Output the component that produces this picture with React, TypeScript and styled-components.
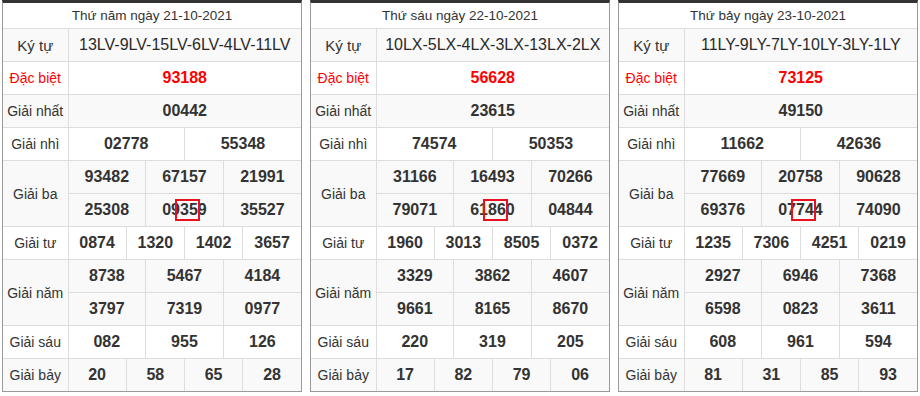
import React from "react";
import styled, { createGlobalStyle } from "styled-components";

const GlobalStyle = createGlobalStyle`
  html, body { margin: 0; padding: 0; background: #fff; }
  body { font-family: "Liberation Sans", Arial, sans-serif; color: #333; }
`;

type Day = {
  title: string;
  code: string;
  db: string;
  nhat: string;
  nhi: string[];
  ba: string[];
  tu: string[];
  nam: string[];
  sau: string[];
  bay: string[];
  hl: number;
};

const days: Day[] = [
  {
    title: "Thứ năm ngày 21-10-2021",
    code: "13LV-9LV-15LV-6LV-4LV-11LV",
    db: "93188",
    nhat: "00442",
    nhi: ["02778", "55348"],
    ba: ["93482", "67157", "21991", "25308", "09359", "35527"],
    tu: ["0874", "1320", "1402", "3657"],
    nam: ["8738", "5467", "4184", "3797", "7319", "0977"],
    sau: ["082", "955", "126"],
    bay: ["20", "58", "65", "28"],
    hl: 4,
  },
  {
    title: "Thứ sáu ngày 22-10-2021",
    code: "10LX-5LX-4LX-3LX-13LX-2LX",
    db: "56628",
    nhat: "23615",
    nhi: ["74574", "50353"],
    ba: ["31166", "16493", "70266", "79071", "61860", "04844"],
    tu: ["1960", "3013", "8505", "0372"],
    nam: ["3329", "3862", "4607", "9661", "8165", "8670"],
    sau: ["220", "319", "205"],
    bay: ["17", "82", "79", "06"],
    hl: 4,
  },
  {
    title: "Thứ bảy ngày 23-10-2021",
    code: "11LY-9LY-7LY-10LY-3LY-1LY",
    db: "73125",
    nhat: "49150",
    nhi: ["11662", "42636"],
    ba: ["77669", "20758", "90628", "69376", "07744", "74090"],
    tu: ["1235", "7306", "4251", "0219"],
    nam: ["2927", "6946", "7368", "6598", "0823", "3611"],
    sau: ["608", "961", "594"],
    bay: ["81", "31", "85", "93"],
    hl: 4,
  },
];

const Page = styled.div`
  display: flex;
  gap: 8px;
  padding-left: 2px;
`;

const Frame = styled.div`
  box-sizing: border-box;
  width: 300px;
  border: 1px solid #9a9a9a;
  border-top: 3px solid #333;
`;

const Table = styled.table`
  width: 100%;
  table-layout: fixed;
  border-collapse: collapse;
  border-style: hidden;
`;

const Row = styled.tr<{ $striped?: boolean }>`
  background: ${(p) => (p.$striped ? "#f9f9f9" : "#fff")};
`;

const TitleCell = styled.td`
  height: 25px;
  padding: 0;
  border: 1px solid #ddd;
  text-align: center;
  vertical-align: middle;
  font-size: 13.5px;
  color: #333;
  background: #fff;
`;

const LabelCell = styled.td<{ $red?: boolean; $big?: boolean }>`
  height: 32px;
  padding: 0;
  border: 1px solid #ddd;
  text-align: center;
  vertical-align: middle;
  font-size: ${(p) => (p.$big ? "15px" : "14px")};
  color: ${(p) => (p.$red ? "#f00" : "#333")};
  white-space: nowrap;
`;

const ValueCell = styled.td<{ $red?: boolean; $plain?: boolean }>`
  height: 32px;
  padding: 0;
  border: 1px solid #ddd;
  text-align: center;
  vertical-align: middle;
  font-size: 16px;
  font-weight: ${(p) => (p.$plain ? 400 : 700)};
  color: ${(p) => (p.$red ? "#f00" : p.$plain ? "#2a2a2a" : "#333")};
  white-space: nowrap;
`;

const Num = styled.span`
  position: relative;
  display: inline-block;
  line-height: 20px;
`;

const Mark = styled.span`
  position: absolute;
  left: 13px;
  top: -1px;
  width: 25px;
  height: 22px;
  box-sizing: border-box;
  border: 2px solid #e8101c;
`;

const NumCells: React.FC<{ values: string[]; hl?: number; offset?: number }> = ({
  values,
  hl,
  offset = 0,
}) => {
  const span = 12 / values.length;
  return (
    <>
      {values.map((v, i) => (
        <ValueCell key={i} colSpan={span}>
          <Num>
            {v}
            {hl === i + offset && <Mark />}
          </Num>
        </ValueCell>
      ))}
    </>
  );
};

const DayTable: React.FC<{ d: Day }> = ({ d }) => (
  <Frame>
    <Table>
      <colgroup>
        <col style={{ width: 65 }} />
        {Array.from({ length: 12 }).map((_, i) => (
          <col key={i} />
        ))}
      </colgroup>
      <tbody>
        <Row>
          <TitleCell colSpan={13}>{d.title}</TitleCell>
        </Row>
        <Row $striped>
          <LabelCell $big>Ký tự</LabelCell>
          <ValueCell colSpan={12} $plain>
            {d.code}
          </ValueCell>
        </Row>
        <Row>
          <LabelCell $red>Đặc biệt</LabelCell>
          <ValueCell colSpan={12} $red>
            {d.db}
          </ValueCell>
        </Row>
        <Row $striped>
          <LabelCell>Giải nhất</LabelCell>
          <ValueCell colSpan={12}>{d.nhat}</ValueCell>
        </Row>
        <Row>
          <LabelCell>Giải nhì</LabelCell>
          <NumCells values={d.nhi} />
        </Row>
        <Row $striped>
          <LabelCell rowSpan={2}>Giải ba</LabelCell>
          <NumCells values={d.ba.slice(0, 3)} hl={d.hl} />
        </Row>
        <Row $striped>
          <NumCells values={d.ba.slice(3)} hl={d.hl} offset={3} />
        </Row>
        <Row>
          <LabelCell>Giải tư</LabelCell>
          <NumCells values={d.tu} />
        </Row>
        <Row $striped>
          <LabelCell rowSpan={2}>Giải năm</LabelCell>
          <NumCells values={d.nam.slice(0, 3)} />
        </Row>
        <Row $striped>
          <NumCells values={d.nam.slice(3)} />
        </Row>
        <Row>
          <LabelCell>Giải sáu</LabelCell>
          <NumCells values={d.sau} />
        </Row>
        <Row $striped>
          <LabelCell>Giải bảy</LabelCell>
          <NumCells values={d.bay} />
        </Row>
      </tbody>
    </Table>
  </Frame>
);

export default function App() {
  return (
    <>
      <GlobalStyle />
      <Page>
        {days.map((d) => (
          <DayTable key={d.title} d={d} />
        ))}
      </Page>
    </>
  );
}
